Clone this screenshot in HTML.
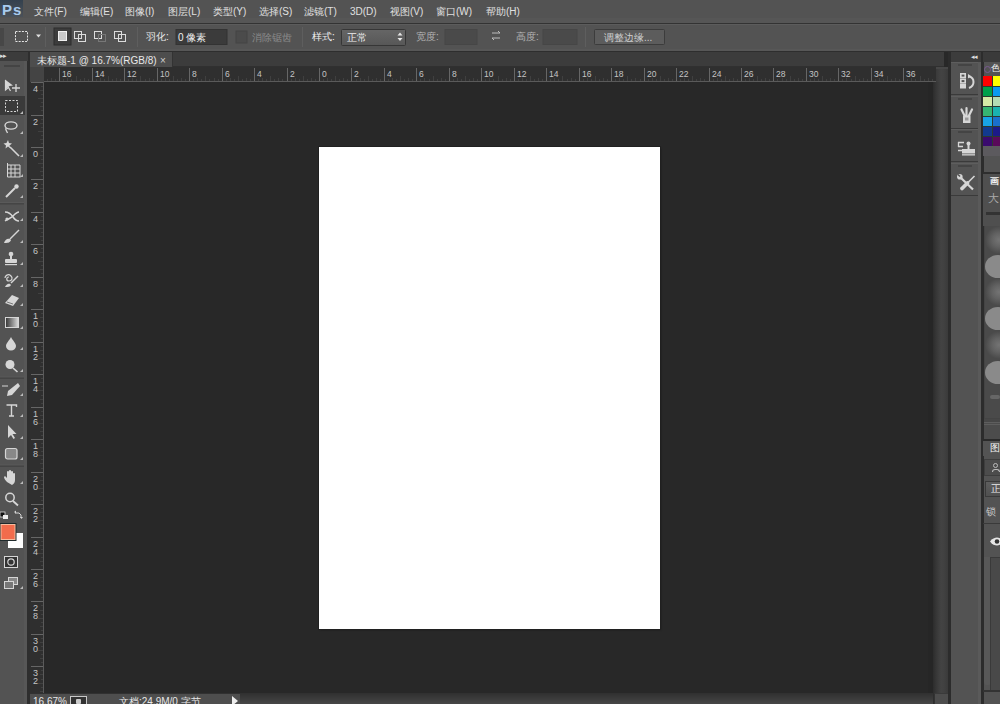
<!DOCTYPE html>
<html><head><meta charset="utf-8">
<style>
*{margin:0;padding:0;box-sizing:border-box}
html,body{width:1000px;height:704px;overflow:hidden;background:#282828;font-family:"Liberation Sans",sans-serif;}
.a{position:absolute}
.t{position:absolute;white-space:nowrap;color:#e0e0e0;font-size:11px;line-height:13px}
</style></head><body>

<div class="a" style="left:0;top:0;width:1000px;height:24px;background:#535353;border-bottom:1px solid #333"></div>
<div class="a" style="left:0;top:18px;width:1000px;height:5px;background:#565656"></div>
<div class="a" style="left:0;top:0;width:23px;height:17px;background:linear-gradient(#34414e,#4a5159)"></div>
<div class="t" style="left:2px;top:1px;font-size:15px;line-height:17px;font-weight:bold;color:#a8cbee;letter-spacing:1px">Ps</div>
<div class="t" style="left:34px;top:5px;font-size:10px">文件(F)</div>
<div class="t" style="left:80px;top:5px;font-size:10px">编辑(E)</div>
<div class="t" style="left:125px;top:5px;font-size:10px">图像(I)</div>
<div class="t" style="left:168px;top:5px;font-size:10px">图层(L)</div>
<div class="t" style="left:213px;top:5px;font-size:10px">类型(Y)</div>
<div class="t" style="left:259px;top:5px;font-size:10px">选择(S)</div>
<div class="t" style="left:304px;top:5px;font-size:10px">滤镜(T)</div>
<div class="t" style="left:350px;top:5px;font-size:10px">3D(D)</div>
<div class="t" style="left:390px;top:5px;font-size:10px">视图(V)</div>
<div class="t" style="left:436px;top:5px;font-size:10px">窗口(W)</div>
<div class="t" style="left:486px;top:5px;font-size:10px">帮助(H)</div>
<div class="a" style="left:0;top:24px;width:1000px;height:28px;background:#535353;border-top:1px solid #5c5c5c;border-bottom:1px solid #2e2e2e"></div>
<div class="a" style="left:0;top:49px;width:1000px;height:2px;background:#575757"></div>
<div class="a" style="left:0;top:28px;width:4px;height:18px;background:#474747"></div>
<div class="a" style="left:45px;top:27px;width:1px;height:20px;background:#3e3e3e;border-right:1px solid #5e5e5e"></div>
<div class="a" style="left:137px;top:27px;width:1px;height:20px;background:#3e3e3e;border-right:1px solid #5e5e5e"></div>
<div class="a" style="left:302px;top:27px;width:1px;height:20px;background:#3e3e3e;border-right:1px solid #5e5e5e"></div>
<div class="a" style="left:585px;top:27px;width:1px;height:20px;background:#3e3e3e;border-right:1px solid #5e5e5e"></div>
<svg class="a" style="left:0;top:24px" width="700" height="27">
<g fill="none" stroke="#e6e6e6" stroke-width="1" stroke-dasharray="2 1.2">
<rect x="15.5" y="7.5" width="12" height="10"/>
</g>
<path d="M36 10.5h5l-2.5 3z" fill="#e0e0e0"/>
<rect x="54" y="4" width="17" height="17" fill="#3c3c3c" stroke="#2c2c2c"/>
<rect x="58.5" y="7.5" width="8" height="9" fill="#c8c8c8" stroke="#f0f0f0"/>
<g fill="none" stroke="#dcdcdc">
<rect x="74.5" y="7.5" width="7" height="7"/><rect x="78.5" y="10.5" width="7" height="7"/>
<rect x="94.5" y="7.5" width="7" height="7"/><rect x="98.5" y="10.5" width="7" height="7" stroke="#777"/>
<rect x="114.5" y="7.5" width="7" height="7"/><rect x="118.5" y="10.5" width="7" height="7"/>
</g>
<rect x="176" y="5.5" width="51" height="15" fill="#3b3b3b" stroke="#333"/>
<rect x="236" y="7" width="11" height="12" fill="#4b4b4b" stroke="#444"/>
<defs><linearGradient id="sel" x1="0" y1="0" x2="0" y2="1"><stop offset="0" stop-color="#666"/><stop offset="1" stop-color="#575757"/></linearGradient></defs><rect x="341.5" y="5.5" width="64" height="16" rx="1" fill="url(#sel)" stroke="#363636"/>
<path d="M397.5 11.5l2.5-3 2.5 3zM397.5 14l2.5 3 2.5-3z" fill="#e6e6e6"/>
<rect x="445" y="5.5" width="32" height="15" fill="#4a4a4a" stroke="#464646"/>
<rect x="543" y="5.5" width="34" height="15" fill="#4a4a4a" stroke="#464646"/>
<path d="M492 9h8l-2-2M500 14h-8l2 2" stroke="#bdbdbd" fill="none"/>
<rect x="594.5" y="5.5" width="70" height="15" rx="1" fill="#5c5c5c" stroke="#3c3c3c"/>
</svg>
<div class="t" style="left:146px;top:30px;font-size:10px;color:#e8e8e8">羽化:</div>
<div class="t" style="left:178px;top:31px;font-size:10px;color:#f0f0f0">0 像素</div>
<div class="t" style="left:252px;top:31px;font-size:10px;color:#8a8a8a">消除锯齿</div>
<div class="t" style="left:312px;top:30px;font-size:10px;color:#efefef">样式:</div>
<div class="t" style="left:347px;top:31px;font-size:10px;color:#f0f0f0">正常</div>
<div class="t" style="left:416px;top:30px;font-size:10px;color:#b4b4b4">宽度:</div>
<div class="t" style="left:516px;top:30px;font-size:10px;color:#b4b4b4">高度:</div>
<div class="t" style="left:604px;top:31px;font-size:10px;color:#cfcfcf">调整边缘...</div>
<div class="a" style="left:28px;top:52px;width:916px;height:15px;background:#3c3c3c;border-bottom:1px solid #303030"></div>
<div class="a" style="left:30px;top:52px;width:143px;height:15px;background:#4d4d4d;border-right:1px solid #333"></div>
<div class="t" style="left:37px;top:54px;font-size:10px;color:#e8e8e8">未标题-1 @ 16.7%(RGB/8)</div>
<div class="t" style="left:160px;top:54px;font-size:10px;color:#d0d0d0">×</div>
<svg class="a" style="left:30px;top:67px" width="906" height="15"><rect x="0" y="0" width="907" height="15" fill="#2f2f2f"/><rect x="0" y="14" width="907" height="1" fill="#5a5a5a"/><rect x="0" y="0" width="14" height="15" fill="#444"/><path d="M17.5 12v2M21.5 11v3M25.5 12v2M33.5 12v2M37.5 11v3M41.5 12v2M46.5 9v5M50.5 12v2M54.5 11v3M58.5 12v2M66.5 12v2M70.5 11v3M74.5 12v2M78.5 9v5M82.5 12v2M86.5 11v3M90.5 12v2M98.5 12v2M102.5 11v3M106.5 12v2M110.5 9v5M115.5 12v2M119.5 11v3M123.5 12v2M131.5 12v2M135.5 11v3M139.5 12v2M143.5 9v5M147.5 12v2M151.5 11v3M155.5 12v2M163.5 12v2M167.5 11v3M171.5 12v2M175.5 9v5M179.5 12v2M184.5 11v3M188.5 12v2M196.5 12v2M200.5 11v3M204.5 12v2M208.5 9v5M212.5 12v2M216.5 11v3M220.5 12v2M228.5 12v2M232.5 11v3M236.5 12v2M240.5 9v5M244.5 12v2M248.5 11v3M252.5 12v2M261.5 12v2M265.5 11v3M269.5 12v2M273.5 9v5M277.5 12v2M281.5 11v3M285.5 12v2M293.5 12v2M297.5 11v3M301.5 12v2M305.5 9v5M309.5 12v2M313.5 11v3M317.5 12v2M326.5 12v2M330.5 11v3M334.5 12v2M338.5 9v5M342.5 12v2M346.5 11v3M350.5 12v2M358.5 12v2M362.5 11v3M366.5 12v2M370.5 9v5M374.5 12v2M378.5 11v3M382.5 12v2M390.5 12v2M394.5 11v3M399.5 12v2M403.5 9v5M407.5 12v2M411.5 11v3M415.5 12v2M423.5 12v2M427.5 11v3M431.5 12v2M435.5 9v5M439.5 12v2M443.5 11v3M447.5 12v2M455.5 12v2M459.5 11v3M463.5 12v2M468.5 9v5M472.5 12v2M476.5 11v3M480.5 12v2M488.5 12v2M492.5 11v3M496.5 12v2M500.5 9v5M504.5 12v2M508.5 11v3M512.5 12v2M520.5 12v2M524.5 11v3M528.5 12v2M532.5 9v5M537.5 12v2M541.5 11v3M545.5 12v2M553.5 12v2M557.5 11v3M561.5 12v2M565.5 9v5M569.5 12v2M573.5 11v3M577.5 12v2M585.5 12v2M589.5 11v3M593.5 12v2M597.5 9v5M601.5 12v2M605.5 11v3M610.5 12v2M618.5 12v2M622.5 11v3M626.5 12v2M630.5 9v5M634.5 12v2M638.5 11v3M642.5 12v2M650.5 12v2M654.5 11v3M658.5 12v2M662.5 9v5M666.5 12v2M670.5 11v3M674.5 12v2M683.5 12v2M687.5 11v3M691.5 12v2M695.5 9v5M699.5 12v2M703.5 11v3M707.5 12v2M715.5 12v2M719.5 11v3M723.5 12v2M727.5 9v5M731.5 12v2M735.5 11v3M739.5 12v2M747.5 12v2M752.5 11v3M756.5 12v2M760.5 9v5M764.5 12v2M768.5 11v3M772.5 12v2M780.5 12v2M784.5 11v3M788.5 12v2M792.5 9v5M796.5 12v2M800.5 11v3M804.5 12v2M812.5 12v2M816.5 11v3M821.5 12v2M825.5 9v5M829.5 12v2M833.5 11v3M837.5 12v2M845.5 12v2M849.5 11v3M853.5 12v2M857.5 9v5M861.5 12v2M865.5 11v3M869.5 12v2M877.5 12v2M881.5 11v3M885.5 12v2M890.5 9v5M894.5 12v2M898.5 11v3M902.5 12v2" stroke="#404040" stroke-width="1"/><path d="M29.5 1v13M62.5 1v13M94.5 1v13M127.5 1v13M159.5 1v13M192.5 1v13M224.5 1v13M257.5 1v13M289.5 1v13M321.5 1v13M354.5 1v13M386.5 1v13M419.5 1v13M451.5 1v13M484.5 1v13M516.5 1v13M549.5 1v13M581.5 1v13M614.5 1v13M646.5 1v13M679.5 1v13M711.5 1v13M743.5 1v13M776.5 1v13M808.5 1v13M841.5 1v13M873.5 1v13" stroke="#666" stroke-width="1"/><g fill="#c4c4c4" font-size="8.5px" font-family="Liberation Sans"><text x="32.0" y="10">16</text><text x="65.0" y="10">14</text><text x="97.0" y="10">12</text><text x="130.0" y="10">10</text><text x="162.0" y="10">8</text><text x="195.0" y="10">6</text><text x="227.0" y="10">4</text><text x="260.0" y="10">2</text><text x="292.0" y="10">0</text><text x="324.0" y="10">2</text><text x="357.0" y="10">4</text><text x="389.0" y="10">6</text><text x="422.0" y="10">8</text><text x="454.0" y="10">10</text><text x="487.0" y="10">12</text><text x="519.0" y="10">14</text><text x="552.0" y="10">16</text><text x="584.0" y="10">18</text><text x="617.0" y="10">20</text><text x="649.0" y="10">22</text><text x="682.0" y="10">24</text><text x="714.0" y="10">26</text><text x="746.0" y="10">28</text><text x="779.0" y="10">30</text><text x="811.0" y="10">32</text><text x="844.0" y="10">34</text><text x="876.0" y="10">36</text></g></svg>
<svg class="a" style="left:30px;top:82px" width="14" height="611"><rect x="0" y="0" width="14" height="611" fill="#2f2f2f"/><rect x="13" y="0" width="1" height="611" fill="#5a5a5a"/><path d="M11 4.5h2M10 8.5h3M11 12.5h2M8 16.5h5M11 20.5h2M10 24.5h3M11 28.5h2M11 37.5h2M10 41.5h3M11 45.5h2M8 49.5h5M11 53.5h2M10 57.5h3M11 61.5h2M11 69.5h2M10 73.5h3M11 77.5h2M8 81.5h5M11 85.5h2M10 89.5h3M11 93.5h2M11 102.5h2M10 106.5h3M11 110.5h2M8 114.5h5M11 118.5h2M10 122.5h3M11 126.5h2M11 134.5h2M10 138.5h3M11 142.5h2M8 146.5h5M11 150.5h2M10 154.5h3M11 158.5h2M11 166.5h2M10 170.5h3M11 175.5h2M8 179.5h5M11 183.5h2M10 187.5h3M11 191.5h2M11 199.5h2M10 203.5h3M11 207.5h2M8 211.5h5M11 215.5h2M10 219.5h3M11 223.5h2M11 231.5h2M10 235.5h3M11 239.5h2M8 244.5h5M11 248.5h2M10 252.5h3M11 256.5h2M11 264.5h2M10 268.5h3M11 272.5h2M8 276.5h5M11 280.5h2M10 284.5h3M11 288.5h2M11 296.5h2M10 300.5h3M11 304.5h2M8 308.5h5M11 313.5h2M10 317.5h3M11 321.5h2M11 329.5h2M10 333.5h3M11 337.5h2M8 341.5h5M11 345.5h2M10 349.5h3M11 353.5h2M11 361.5h2M10 365.5h3M11 369.5h2M8 373.5h5M11 377.5h2M10 381.5h3M11 386.5h2M11 394.5h2M10 398.5h3M11 402.5h2M8 406.5h5M11 410.5h2M10 414.5h3M11 418.5h2M11 426.5h2M10 430.5h3M11 434.5h2M8 438.5h5M11 442.5h2M10 446.5h3M11 450.5h2M11 459.5h2M10 463.5h3M11 467.5h2M8 471.5h5M11 475.5h2M10 479.5h3M11 483.5h2M11 491.5h2M10 495.5h3M11 499.5h2M8 503.5h5M11 507.5h2M10 511.5h3M11 515.5h2M11 523.5h2M10 528.5h3M11 532.5h2M8 536.5h5M11 540.5h2M10 544.5h3M11 548.5h2M11 556.5h2M10 560.5h3M11 564.5h2M8 568.5h5M11 572.5h2M10 576.5h3M11 580.5h2M11 588.5h2M10 592.5h3M11 597.5h2M8 601.5h5M11 605.5h2M10 609.5h3" stroke="#404040" stroke-width="1"/><path d="M1 0.5h12M1 33.5h12M1 65.5h12M1 97.5h12M1 130.5h12M1 162.5h12M1 195.5h12M1 227.5h12M1 260.5h12M1 292.5h12M1 325.5h12M1 357.5h12M1 390.5h12M1 422.5h12M1 455.5h12M1 487.5h12M1 519.5h12M1 552.5h12M1 584.5h12" stroke="#666" stroke-width="1"/><g fill="#c4c4c4" font-size="8.5px" font-family="Liberation Sans"><text x="3" y="10.0" font-size="9px">4</text><text x="3" y="43.0" font-size="9px">2</text><text x="3" y="75.0" font-size="9px">0</text><text x="3" y="107.0" font-size="9px">2</text><text x="3" y="140.0" font-size="9px">4</text><text x="3" y="172.0" font-size="9px">6</text><text x="3" y="205.0" font-size="9px">8</text><text x="3" y="237.0" font-size="9px">1</text><text x="3" y="245.0" font-size="9px">0</text><text x="3" y="270.0" font-size="9px">1</text><text x="3" y="278.0" font-size="9px">2</text><text x="3" y="302.0" font-size="9px">1</text><text x="3" y="310.0" font-size="9px">4</text><text x="3" y="335.0" font-size="9px">1</text><text x="3" y="343.0" font-size="9px">6</text><text x="3" y="367.0" font-size="9px">1</text><text x="3" y="375.0" font-size="9px">8</text><text x="3" y="400.0" font-size="9px">2</text><text x="3" y="408.0" font-size="9px">0</text><text x="3" y="432.0" font-size="9px">2</text><text x="3" y="440.0" font-size="9px">2</text><text x="3" y="465.0" font-size="9px">2</text><text x="3" y="473.0" font-size="9px">4</text><text x="3" y="497.0" font-size="9px">2</text><text x="3" y="505.0" font-size="9px">6</text><text x="3" y="529.0" font-size="9px">2</text><text x="3" y="537.0" font-size="9px">8</text><text x="3" y="562.0" font-size="9px">3</text><text x="3" y="570.0" font-size="9px">0</text><text x="3" y="594.0" font-size="9px">3</text><text x="3" y="602.0" font-size="9px">2</text></g></svg>
<div class="a" style="left:44px;top:82px;width:889px;height:611px;background:#282828"></div>
<div class="a" style="left:928px;top:82px;width:5px;height:611px;background:#262626"></div>
<div class="a" style="left:319px;top:147px;width:341px;height:482px;background:#fff;box-shadow:0 0 0 1px #202020,1px 1px 2px rgba(0,0,0,.35)"></div>
<div class="a" style="left:30px;top:693px;width:906px;height:11px;background:linear-gradient(#303030,#464646)"></div>
<div class="a" style="left:30px;top:694px;width:210px;height:10px;background:#4e4e4e"></div>
<div class="t" style="left:33px;top:696px;font-size:10px;line-height:11px;color:#e6e6e6">16.67%</div>
<div class="a" style="left:70px;top:696px;width:17px;height:8px;border:1px solid #c8c8c8;border-bottom:0;background:#333"></div>
<div class="a" style="left:76px;top:699px;width:5px;height:5px;background:#ccc;border-radius:1px"></div>
<div class="t" style="left:119px;top:696px;font-size:10px;line-height:11px;color:#e6e6e6">文档:24.9M/0 字节</div>
<svg class="a" style="left:230px;top:694px" width="10" height="10"><path d="M2 2l6 5-6 5z" fill="#eee"/></svg>
<div class="a" style="left:0;top:52px;width:28px;height:652px;background:#535353"></div>
<div class="a" style="left:24px;top:52px;width:3px;height:652px;background:#575757"></div>
<div class="a" style="left:27px;top:52px;width:3px;height:652px;background:#2e2e2e"></div>
<div class="a" style="left:0;top:52px;width:28px;height:9px;background:#3c3c3c"></div>
<div class="t" style="left:0;top:52px;font-size:7px;line-height:8px;color:#ddd;letter-spacing:-1px">▸▸</div>
<div class="a" style="left:4px;top:65px;width:16px;height:2px;background:#444"></div>
<div class="a" style="left:933px;top:82px;width:15px;height:622px;background:linear-gradient(to right,#2c2c2c 0,#363636 3px,#434343 8px,#414141 11px,#3a3a3a 15px)"></div>
<div class="a" style="left:934px;top:693px;width:14px;height:11px;background:#4d4d4d;border-top:1px solid #3a3a3a;border-left:1px solid #333"></div>
<div class="a" style="left:936px;top:67px;width:12px;height:15px;background:linear-gradient(to right,#3a3a3a 0,#434343 5px,#414141 8px,#3a3a3a 12px);border-top:2px solid #474747"></div>
<div class="a" style="left:948px;top:52px;width:3px;height:652px;background:#2c2c2c"></div>
<div class="a" style="left:951px;top:52px;width:30px;height:652px;background:#535353;border-right:3px solid #5a5a5a"></div>
<div class="a" style="left:951px;top:52px;width:30px;height:10px;background:#3c3c3c"></div>
<div class="t" style="left:971px;top:53px;font-size:7px;line-height:8px;color:#ddd;letter-spacing:-1px">◂◂</div>
<div class="a" style="left:981px;top:52px;width:3px;height:652px;background:#2c2c2c"></div>
<div class="a" style="left:984px;top:52px;width:16px;height:652px;background:#535353"></div>
<div class="a" style="left:951px;top:62px;width:27px;height:33px;border-bottom:1px solid #3a3a3a;border-top:1px solid #5e5e5e"></div>
<div class="a" style="left:958px;top:64px;width:14px;height:2px;background:#444"></div>
<div class="a" style="left:951px;top:96px;width:27px;height:33px;border-bottom:1px solid #3a3a3a;border-top:1px solid #5e5e5e"></div>
<div class="a" style="left:958px;top:98px;width:14px;height:2px;background:#444"></div>
<div class="a" style="left:951px;top:129px;width:27px;height:33px;border-bottom:1px solid #3a3a3a;border-top:1px solid #5e5e5e"></div>
<div class="a" style="left:958px;top:131px;width:14px;height:2px;background:#444"></div>
<div class="a" style="left:951px;top:163px;width:27px;height:33px;border-bottom:1px solid #3a3a3a;border-top:1px solid #5e5e5e"></div>
<div class="a" style="left:958px;top:165px;width:14px;height:2px;background:#444"></div>
<svg class="a" style="left:0;top:0" width="28" height="704"><rect x="0" y="96" width="25" height="19" fill="#3a3a3a"/><g fill="none" stroke="#d6d6d6" stroke-width="1.2"><path d="M5.5 80v10l3-2.5 2 3.5" /></g><path d="M5 79.5l8 6-3.5.5-4.5 4z" fill="#d6d6d6"/><path d="M16 84v8M12 88h8" stroke="#d6d6d6" stroke-width="1.3"/><rect x="5.5" y="100.5" width="12" height="11" fill="none" stroke="#d6d6d6" stroke-dasharray="2 1.5"/><ellipse cx="11" cy="125.5" rx="6" ry="3.6" fill="none" stroke="#d6d6d6" stroke-width="1.4"/><path d="M6 128c-1 2 1 3 1.5 5" fill="none" stroke="#d6d6d6" stroke-width="1.3"/><path d="M8 140l1 3 3 .5-2.5 2 1 3-2.5-2-2.5 2 .5-3-2.5-2 3-.5z" fill="#d6d6d6"/><path d="M10 147l9 9" stroke="#d6d6d6" stroke-width="1.6"/><path d="M7.5 163v14h13M7 165h13v12M11 165v12M15 165v12M7 169h13M7 173h13" fill="none" stroke="#d6d6d6" stroke-width="1"/><path d="M6 197l9-9" stroke="#d6d6d6" stroke-width="2"/><circle cx="16.5" cy="186.5" r="2.2" fill="#d6d6d6"/><path d="M5 212c4 0 6 2 8 5s4 4 6 4M5 221c3-2 6-3 8-5s4-4 6-4" fill="none" stroke="#d6d6d6" stroke-width="1.5"/><circle cx="7" cy="219" r="1.6" fill="#d6d6d6"/><path d="M19 230l-9 9" stroke="#d6d6d6" stroke-width="1.5"/><path d="M4 243c1-3 3-5 6-4l1 1c-1 3-4 3-7 3z" fill="#d6d6d6"/><circle cx="11" cy="254" r="2.3" fill="#d6d6d6"/><rect x="10" y="255" width="2" height="4" fill="#d6d6d6"/><rect x="5" y="259" width="12" height="4" rx="1" fill="#d6d6d6"/><rect x="5" y="264" width="12" height="1.2" fill="#d6d6d6"/><path d="M9 277c-3 0-3 4 0 4s4-3 2-5c-3-3-6 0-6 2" fill="none" stroke="#d6d6d6" stroke-width="1.2"/><path d="M18 276l-7 7" stroke="#d6d6d6" stroke-width="1.4"/><path d="M5 287c1-2 3-4 5-3l1 1c-1 2-3 2-6 2z" fill="#d6d6d6"/><path d="M12 295l7 3-6 8-8-3z" fill="#d6d6d6"/><path d="M7 302l6 2" stroke="#777" stroke-width="1"/><defs><linearGradient id="g1" x1="0" x2="1"><stop offset="0" stop-color="#333"/><stop offset="1" stop-color="#ddd"/></linearGradient></defs><rect x="5.5" y="317.5" width="13" height="10" fill="url(#g1)" stroke="#d6d6d6"/><path d="M11 337c-2 4-5 6-5 9a5 4.5 0 0 0 10 0c0-3-3-5-5-9z" fill="#d6d6d6"/><circle cx="10" cy="364.5" r="4.5" fill="#d6d6d6"/><path d="M13 368l4.5 4" stroke="#d6d6d6" stroke-width="1.6"/><rect x="0" y="376.5" width="24" height="1" fill="#5a5a5a"/><rect x="0" y="377.5" width="24" height="1.5" fill="#454545"/><rect x="0" y="202" width="24" height="1" fill="#5a5a5a"/><rect x="0" y="203" width="24" height="1.5" fill="#454545"/><path d="M18 383l2 3-8 9-5 1 1-5z" fill="#d6d6d6"/><path d="M2 386h6" stroke="#d6d6d6" stroke-width="1"/><path d="M6.5 405h10v2M11.5 405v11M9 416h5" fill="none" stroke="#d6d6d6" stroke-width="1.4"/><path d="M8 425v13l3-3 2.5 4 1.5-1-2.5-4h4z" fill="#d6d6d6"/><rect x="5.5" y="448.5" width="11.5" height="10.5" rx="2" fill="#888" stroke="#d6d6d6" stroke-width="1.2"/><rect x="0" y="464.5" width="24" height="1" fill="#5a5a5a"/><rect x="0" y="465.5" width="24" height="1.5" fill="#454545"/><path d="M7 482c-2-2-3-4-3-5l1-1 2 2v-6a1 1 0 0 1 2 0v4-5a1 1 0 0 1 2 0v5-4a1 1 0 0 1 2 0v5-3a1 1 0 0 1 2 0v6c0 2-1 4-3 5z" fill="#d6d6d6"/><circle cx="10" cy="497.5" r="4.2" fill="#555" stroke="#d6d6d6" stroke-width="1.5"/><path d="M13 501l5 4.5" stroke="#d6d6d6" stroke-width="1.8"/><rect x="0" y="512" width="5" height="5" fill="#111" stroke="#ddd" stroke-width=".8"/><rect x="3" y="515" width="5" height="4" fill="#eee"/><path d="M15 513h4l2 2v3" fill="none" stroke="#d6d6d6" stroke-width="1"/><path d="M14 512l2-1.5v3zM20 517l1.5 2 1.5-2z" fill="#d6d6d6"/><rect x="8" y="533" width="15" height="15" fill="#fefefe"/><rect x="0" y="523" width="16.5" height="18" fill="#1f2a2c"/><rect x="1" y="524.5" width="14" height="15" fill="#f26c4c" stroke="#f7bc9e"/><rect x="4.5" y="556.5" width="13" height="11" fill="#333" stroke="#d6d6d6"/><circle cx="11" cy="562" r="3.2" fill="none" stroke="#d6d6d6" stroke-width="1.2"/><rect x="8.5" y="577.5" width="9" height="7" fill="#888" stroke="#d6d6d6"/><rect x="4.5" y="581.5" width="9" height="7" fill="#777" stroke="#d6d6d6"/><path d="M23 111v3h-3z" fill="#bbb"/><path d="M23 131v3h-3z" fill="#bbb"/><path d="M23 154v3h-3z" fill="#bbb"/><path d="M23 174v3h-3z" fill="#bbb"/><path d="M23 195v3h-3z" fill="#bbb"/><path d="M23 218v3h-3z" fill="#bbb"/><path d="M23 240v3h-3z" fill="#bbb"/><path d="M23 262v3h-3z" fill="#bbb"/><path d="M23 284v3h-3z" fill="#bbb"/><path d="M23 303v3h-3z" fill="#bbb"/><path d="M23 326v3h-3z" fill="#bbb"/><path d="M23 347v3h-3z" fill="#bbb"/><path d="M23 369v3h-3z" fill="#bbb"/><path d="M23 393v3h-3z" fill="#bbb"/><path d="M23 414v3h-3z" fill="#bbb"/><path d="M23 436v3h-3z" fill="#bbb"/><path d="M23 457v3h-3z" fill="#bbb"/><path d="M23 481v3h-3z" fill="#bbb"/><path d="M23 586v3h-3z" fill="#bbb"/></svg>
<svg class="a" style="left:951px;top:0" width="30" height="704"><g fill="none" stroke="#d6d6d6" stroke-width="1.6"><rect x="9.8" y="73.8" width="4.4" height="3.6"/><rect x="9.8" y="79.3" width="4.4" height="3.6"/></g><rect x="9" y="84" width="6" height="4.5" fill="#d6d6d6"/><path d="M18 76.5c2.5 .5 4.5 2.5 4.5 5.5s-2 5-4.5 6" fill="none" stroke="#d6d6d6" stroke-width="2"/><path d="M17 74l3 2-3 2.5z" fill="#d6d6d6"/><path d="M10.5 109.5l3 6M15.5 108v7.5M21 109.5l-3 6" stroke="#d6d6d6" stroke-width="2.2" stroke-linecap="round"/><rect x="12" y="115.5" width="7.5" height="7.5" fill="#d6d6d6"/><rect x="14" y="117.5" width="3.5" height="3" fill="#999"/><path d="M7 142.5h6M7 146.5h5M7 150.5h5M7.5 142v5" stroke="#d6d6d6" stroke-width="1.3" fill="none"/><circle cx="17.5" cy="143.5" r="2" fill="#d6d6d6"/><rect x="16.5" y="144" width="2" height="5" fill="#d6d6d6"/><rect x="11" y="149" width="13" height="4.5" fill="#d6d6d6"/><rect x="11" y="154.2" width="13" height="1.3" fill="#d6d6d6"/><path d="M9.5 177.5l12.5 12" stroke="#d6d6d6" stroke-width="2.2"/><circle cx="8.8" cy="176.8" r="2.8" fill="#d6d6d6"/><path d="M7 174.5l2 2" stroke="#535353" stroke-width="1.6"/><path d="M23.5 176l-7 7" stroke="#d6d6d6" stroke-width="1.6"/><path d="M16.5 183l-5.5 5.5" stroke="#d6d6d6" stroke-width="3.8" stroke-linecap="round"/></svg>
<div class="a" style="left:983px;top:52px;width:17px;height:10px;background:#3a3a3a"></div>
<div class="a" style="left:984px;top:66px;width:7px;height:7px;border-radius:50%;border:1.5px solid #7a5a92"></div>
<div class="t" style="left:991px;top:63px;font-size:9px;line-height:11px;color:#eee">色</div>
<div class="a" style="left:983px;top:76px;width:17px;height:71px;background:#2c3a30"></div>
<div class="a" style="left:983px;top:76px;width:9px;height:10px;background:#ff0000"></div>
<div class="a" style="left:993px;top:76px;width:7px;height:10px;background:#ffff00"></div>
<div class="a" style="left:983px;top:87px;width:9px;height:9px;background:#00a04a"></div>
<div class="a" style="left:993px;top:87px;width:7px;height:9px;background:#0a9af0"></div>
<div class="a" style="left:983px;top:97px;width:9px;height:9px;background:#d6eaa6"></div>
<div class="a" style="left:993px;top:97px;width:7px;height:9px;background:#b4dcb4"></div>
<div class="a" style="left:983px;top:107px;width:9px;height:9px;background:#36b572"></div>
<div class="a" style="left:993px;top:107px;width:7px;height:9px;background:#1ab2b0"></div>
<div class="a" style="left:983px;top:117px;width:9px;height:9px;background:#18a4e6"></div>
<div class="a" style="left:993px;top:117px;width:7px;height:9px;background:#1a70cc"></div>
<div class="a" style="left:983px;top:127px;width:9px;height:9px;background:#123a8e"></div>
<div class="a" style="left:993px;top:127px;width:7px;height:9px;background:#1c1a88"></div>
<div class="a" style="left:983px;top:137px;width:9px;height:9px;background:#3a0a6e"></div>
<div class="a" style="left:993px;top:137px;width:7px;height:9px;background:#5a0a5a"></div>
<div class="a" style="left:983px;top:146px;width:17px;height:10px;background:#5c5a5e"></div>
<div class="a" style="left:983px;top:172px;width:17px;height:2px;background:#2e2e2e"></div>
<div class="a" style="left:983px;top:174px;width:17px;height:52px;background:#4f4f4f"></div>
<div class="t" style="left:990px;top:176px;font-size:9px;line-height:11px;color:#f4f4f4;font-weight:bold">画</div>
<div class="t" style="left:988px;top:192px;font-size:11px;line-height:13px;color:#aaa">大</div>
<div class="a" style="left:986px;top:212px;width:14px;height:3px;background:#333"></div>
<div class="a" style="left:984px;top:226px;width:16px;height:193px;background:#4a4a4a;border-left:1px solid #444;border-bottom:1px solid #444"></div>
<div class="a" style="left:990px;top:395px;width:10px;height:4px;border-radius:2px;background:#666"></div>
<div class="a" style="left:985px;top:226px;width:28px;height:28px;border-radius:50%;background:radial-gradient(circle,#747474 0%,#626262 35%,#4a4a4a 70%)"></div>
<div class="a" style="left:985px;top:255px;width:26px;height:23px;border-radius:50%;background:#8a8a8a"></div>
<div class="a" style="left:985px;top:278px;width:28px;height:28px;border-radius:50%;background:radial-gradient(circle,#747474 0%,#626262 35%,#4a4a4a 70%)"></div>
<div class="a" style="left:985px;top:307px;width:26px;height:23px;border-radius:50%;background:#8a8a8a"></div>
<div class="a" style="left:985px;top:331px;width:28px;height:28px;border-radius:50%;background:radial-gradient(circle,#747474 0%,#626262 35%,#4a4a4a 70%)"></div>
<div class="a" style="left:985px;top:361px;width:26px;height:23px;border-radius:50%;background:#8a8a8a"></div>
<div class="a" style="left:984px;top:419px;width:16px;height:3px;background:#474747"></div>
<div class="a" style="left:984px;top:422px;width:16px;height:18px;background:#4c4c4c;border-top:3px double #5e5e5e"></div>
<div class="a" style="left:983px;top:439px;width:17px;height:2px;background:#2a2a2a"></div>
<div class="a" style="left:983px;top:441px;width:17px;height:15px;background:#535353"></div>
<div class="t" style="left:990px;top:442px;font-size:10px;line-height:12px;color:#f4f4f4">图</div>
<div class="a" style="left:984px;top:459px;width:16px;height:17px;background:#4c4c4c;border:1px solid #3e3e3e;border-right:0"></div>
<div class="a" style="left:993px;top:463px;width:5px;height:5px;border-radius:50%;border:1.5px solid #bbb"></div>
<div class="a" style="left:992px;top:469px;width:8px;height:3px;border-radius:3px 3px 0 0;border:1.5px solid #bbb;border-bottom:0"></div>
<div class="a" style="left:985px;top:481px;width:15px;height:16px;background:linear-gradient(#5e5e5e,#505050);border:1px solid #3a3a3a;border-right:0"></div>
<div class="t" style="left:991px;top:483px;font-size:10px;line-height:12px;color:#e8e8e8">正</div>
<div class="t" style="left:986px;top:506px;font-size:10px;line-height:12px;color:#c8c8c8">锁</div>
<div class="a" style="left:983px;top:523px;width:17px;height:1px;background:#3a3a3a"></div>
<svg class="a" style="left:983px;top:530px" width="17" height="20"><path d="M7 11.5c2-3 5-4 7-4s5 1 7 4c-2 3-5 4-7 4s-5-1-7-4z" fill="#e6e6e6"/><circle cx="14" cy="11.5" r="2.3" fill="#333"/></svg>
<div class="a" style="left:984px;top:557px;width:7px;height:128px;background:#585858;border-radius:0 0 3px 3px"></div>
<div class="a" style="left:990px;top:557px;width:10px;height:133px;background:#494949;border-left:1px solid #3a3a3a;border-top:1px solid #3a3a3a"></div>
<div class="a" style="left:983px;top:690px;width:17px;height:2px;background:#333"></div>
</body></html>
